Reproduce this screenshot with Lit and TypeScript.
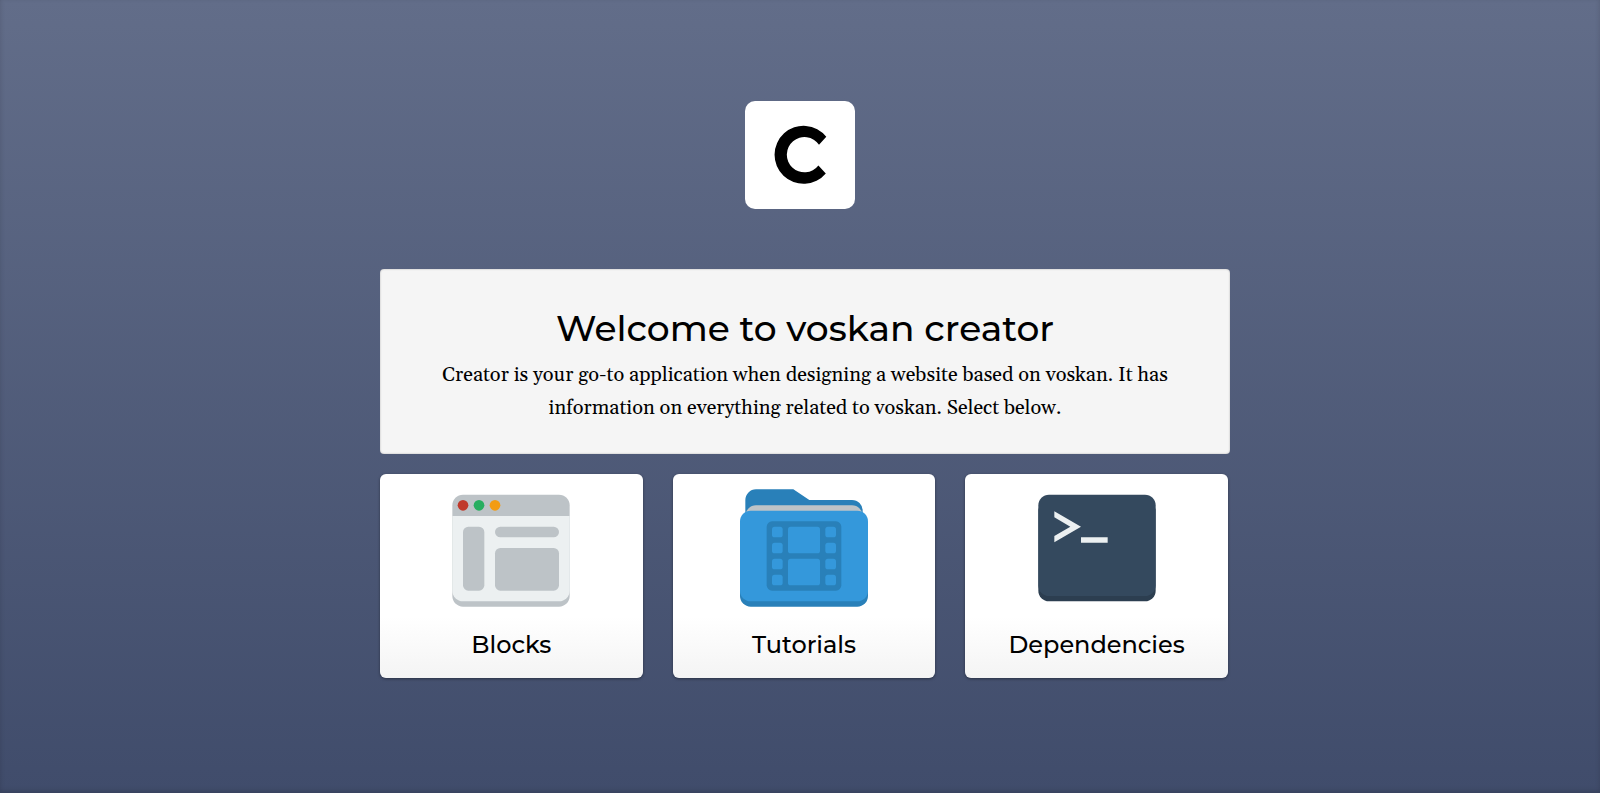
import { LitElement, html, css, svg } from "lit";
import { customElement } from "lit/decorators.js";

const blocksIcon = svg`
  <path fill="#bdc3c7" d="M3 2h18a2 2 0 0 1 2 2v17a2 2 0 0 1-2 2H3a2 2 0 0 1-2-2V4a2 2 0 0 1 2-2z"/>
  <path fill="#ecf0f1" d="M1 6h22v14a2 2 0 0 1-2 2H3a2 2 0 0 1-2-2z"/>
  <circle cx="3" cy="4" r="1" fill="#c0392b"/>
  <circle cx="6" cy="4" r="1" fill="#27ae60"/>
  <circle cx="9" cy="4" r="1" fill="#f39c12"/>
  <g fill="#bdc3c7">
    <rect x="3" y="8" width="4" height="12" rx="1"/>
    <rect x="9" y="8" width="12" height="2" rx="1"/>
    <rect x="9" y="12" width="12" height="8" rx="1"/>
  </g>`;

const tutorialsIcon = svg`
  <path fill="#2980b9" d="M3 1a2 2 0 0 0-2 2v4h22V5a2 2 0 0 0-2-2h-8l-3-2z"/>
  <path fill="#bdc3c7" d="M3 4h18a2 2 0 0 1 2 2v2H1V6a2 2 0 0 1 2-2z"/>
  <rect fill="#2980b9" y="6" width="24" height="17" rx="2"/>
  <rect fill="#3498db" y="5" width="24" height="17" rx="2"/>
  <rect fill="#2980b9" x="5" y="7" width="14" height="13" rx="1"/>
  <g fill="#3498db">
    ${[8, 11, 14, 17].map(
      (y) => svg`
        <rect x="6" y=${y} width="2" height="2" rx=".5"/>
        <rect x="16" y=${y} width="2" height="2" rx=".5"/>`
    )}
    <rect x="9" y="8" width="6" height="5" rx=".5"/>
    <rect x="9" y="14" width="6" height="5" rx=".5"/>
  </g>`;

const dependenciesIcon = svg`
  <rect fill="#2c3e50" x="1" y="3" width="22" height="19" rx="2"/>
  <rect fill="#34495e" x="1" y="2" width="22" height="19" rx="2"/>
  <path fill="#ecf0f1" d="M4 5.1L9 8l-5 2.9V9.75L7 8 4 6.25zM9 10h5v1H9z"/>`;

const sections = [
  { id: "blocks", label: "Blocks", icon: blocksIcon },
  { id: "tutorials", label: "Tutorials", icon: tutorialsIcon },
  { id: "dependencies", label: "Dependencies", icon: dependenciesIcon },
];

@customElement("app-root")
export class AppRoot extends LitElement {
  static styles = css`
    :host {
      display: block;
      box-sizing: border-box;
      min-height: 100vh;
      padding: 101px 20px 40px;
      color: #000;
      background: linear-gradient(#626d89, #404c6b);
      box-shadow: inset 0 -2px 5px rgba(0, 0, 0, 0.15);
    }
    .logo {
      display: block;
      width: 110px;
      height: 108px;
      margin: 0 auto 60px;
      border-radius: 10px;
      background: #fff;
    }
    .content {
      display: flex;
      flex-direction: column;
      gap: 20px;
      max-width: 850px;
      margin: 0 auto;
      padding-left: 10px;
    }
    .welcome {
      padding: 35px 50px 29px;
      border-radius: 4px;
      background: #f5f5f5;
      box-shadow: inset 0 0 2px rgba(0, 0, 0, 0.3);
      text-align: center;
    }
    .title {
      margin: 0 0 7px;
      font: 500 36px/48px Montserrat, Inter, sans-serif;
    }
    .intro {
      margin: 0;
      font: 20px/33px Gelasio, "Liberation Serif", serif;
    }
    .cards {
      display: grid;
      grid-template-columns: repeat(auto-fit, minmax(220px, 1fr));
      gap: 30px;
      padding-right: 2px;
    }
    .card {
      display: flex;
      flex-direction: column;
      align-items: center;
      padding: 10px 10px 17px;
      border-radius: 6px;
      color: inherit;
      background: linear-gradient(#fff 70%, #f4f4f4);
      box-shadow: 0 1px 3px rgba(0, 0, 0, 0.4);
      text-decoration: none;
    }
    .icon {
      width: 128px;
      height: 128px;
    }
    .label {
      margin-top: 17px;
      font: 500 24px/32px Montserrat, Inter, sans-serif;
    }
  `;

  render() {
    return html`
      <header>
        <svg class="logo" viewBox="0 0 110 108" role="img" aria-label="Creator">
          <path
            d="M81.3 35.8A29 29 0 1 0 80.8 72.4L73.4 64.4A17.6 17.6 0 1 1 74 43.8z"
          />
        </svg>
      </header>
      <main class="content">
        <section class="welcome">
          <h1 class="title">Welcome to voskan creator</h1>
          <p class="intro">
            Creator is your go-to application when designing a website based on
            voskan. It has information on everything related to voskan. Select
            below.
          </p>
        </section>
        <nav class="cards">
          ${sections.map(
            (s) => html`
              <a class="card" href="#${s.id}">
                <svg class="icon" viewBox="0 0 24 24" aria-hidden="true">
                  ${s.icon}
                </svg>
                <span class="label">${s.label}</span>
              </a>
            `
          )}
        </nav>
      </main>
    `;
  }
}
